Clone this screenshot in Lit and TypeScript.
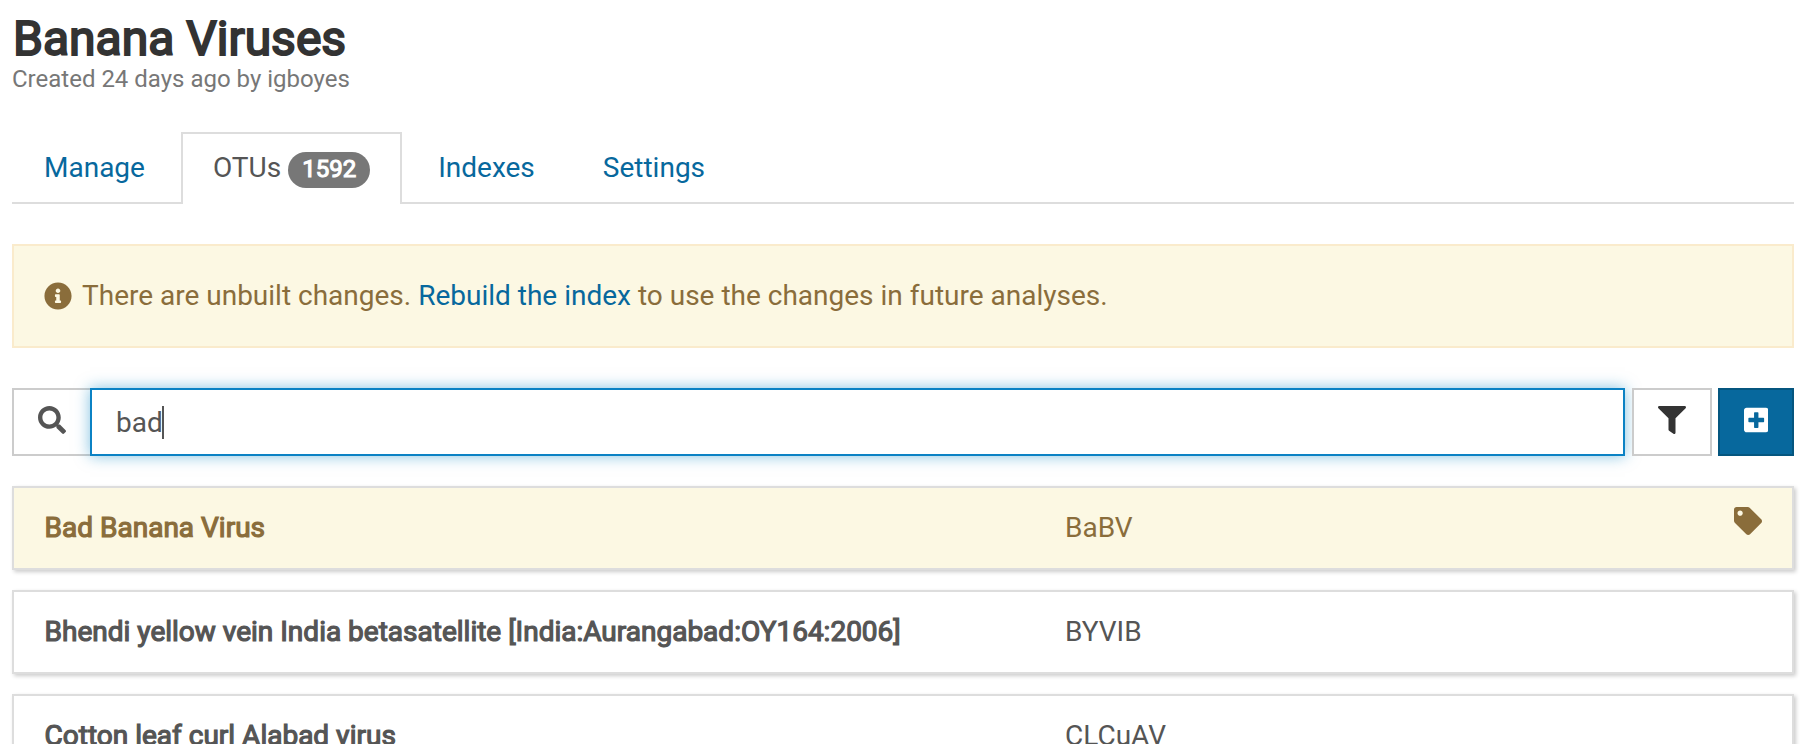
import { LitElement, html, css, svg } from "lit";
import { customElement, property } from "lit/decorators.js";

const ICONS: Record<string, { w: number; d: string }> = {
  info: {
    w: 512,
    d: "M256 8C119.043 8 8 119.083 8 256c0 136.997 111.043 248 248 248s248-111.003 248-248C504 119.083 392.957 8 256 8zm0 110c23.196 0 42 18.804 42 42s-18.804 42-42 42-42-18.804-42-42 18.804-42 42-42zm56 254c0 6.627-5.373 12-12 12h-88c-6.627 0-12-5.373-12-12v-24c0-6.627 5.373-12 12-12h12v-64h-12c-6.627 0-12-5.373-12-12v-24c0-6.627 5.373-12 12-12h64c6.627 0 12 5.373 12 12v100h12c6.627 0 12 5.373 12 12v24z",
  },
  search: {
    w: 512,
    d: "M505 442.7L405.3 343c-4.5-4.5-10.6-7-17-7H372c27.6-35.3 44-79.7 44-128C416 93.1 322.9 0 208 0S0 93.1 0 208s93.1 208 208 208c48.3 0 92.7-16.4 128-44v16.3c0 6.4 2.5 12.5 7 17l99.7 99.7c9.4 9.4 24.6 9.4 33.9 0l28.3-28.3c9.4-9.4 9.4-24.6.1-34zM208 336c-70.7 0-128-57.2-128-128 0-70.7 57.2-128 128-128 70.7 0 128 57.2 128 128 0 70.7-57.2 128-128 128z",
  },
  filter: {
    w: 512,
    d: "M487.976 0H24.028C2.71 0-8.047 25.866 7.058 40.971L192 225.941V432c0 7.831 3.821 15.17 10.237 19.662l80 55.98C298.02 518.69 320 507.493 320 487.98V225.941l184.947-184.97C520.021 25.896 509.338 0 487.976 0z",
  },
  plus: {
    w: 448,
    d: "M400 32H48C21.5 32 0 53.5 0 80v352c0 26.500 21.500 48 48 48h352c26.500 0 48-21.500 48-48V80c0-26.500-21.500-48-48-48zm-32 252c0 6.600-5.400 12-12 12h-92v92c0 6.600-5.400 12-12 12h-56c-6.600 0-12-5.400-12-12v-92H92c-6.600 0-12-5.400-12-12v-56c0-6.600 5.400-12 12-12h92v-92c0-6.600 5.400-12 12-12h56c6.600 0 12 5.400 12 12v92h92c6.600 0 12 5.400 12 12v56z",
  },
  tag: {
    w: 512,
    d: "M0 252.118V48C0 21.490 21.490 0 48 0h204.118a48 48 0 0 1 33.941 14.059l211.882 211.882c18.745 18.745 18.745 49.137 0 67.882L293.823 497.941c-18.745 18.745-49.137 18.745-67.882 0L14.059 286.059A48 48 0 0 1 0 252.118zM112 64c-26.510 0-48 21.490-48 48s21.490 48 48 48 48-21.490 48-48-21.490-48-48-48z",
  },
};

@customElement("fa-icon")
class FaIcon extends LitElement {
  @property() name = "info";

  static styles = css`
    :host {
      display: block;
      height: 28px;
    }
    svg {
      display: block;
      height: 28px;
      fill: currentColor;
    }
  `;

  render() {
    const icon = ICONS[this.name];
    return html`<svg viewBox="0 0 ${icon.w} 512" width=${(icon.w * 28) / 512}>
      ${svg`<path d=${icon.d}></path>`}
    </svg>`;
  }
}

interface Otu {
  name: string;
  abbreviation: string;
  modified?: boolean;
}

@customElement("app-root")
class AppRoot extends LitElement {
  private otus: Otu[] = [
    { name: "Bad Banana Virus", abbreviation: "BaBV", modified: true },
    { name: "Bhendi yellow vein India betasatellite [India:Aurangabad:OY164:2006]", abbreviation: "BYVIB" },
    { name: "Cotton leaf curl Alabad virus", abbreviation: "CLCuAV" },
  ];

  static styles = css`
    * {
      box-sizing: border-box;
    }
    :host {
      display: block;
      height: 744px;
      overflow: hidden;
      padding: 12px 14px 0 12px;
      background: #fff;
      color: #555;
      font: 28px/40px Roboto, sans-serif;
    }
    h1 {
      margin: 0;
      padding-left: 1px;
      font-size: 48px;
      line-height: 53px;
      font-weight: 400;
      color: #333;
      -webkit-text-stroke: 2px #333;
    }
    .created {
      font-size: 24px;
      line-height: 28px;
      color: #777;
    }
    .tabs {
      display: flex;
      gap: 4px;
      height: 72px;
      margin-top: 39px;
      box-shadow: inset 0 -2px #ddd;
    }
    .tab {
      display: flex;
      align-items: center;
      padding: 0 30px 2px;
      border: 2px solid transparent;
      border-bottom: 0;
      color: #07689d;
    }
    .tab.active {
      color: #555;
      background: #fff;
      border-color: #ddd;
    }
    .badge {
      margin: 4px 0 0 7px;
      width: 82px;
      height: 36px;
      border-radius: 18px;
      background: #777;
      color: #fff;
      font-size: 24px;
      line-height: 35px;
      text-align: center;
      -webkit-text-stroke: 1.1px #fff;
    }
    .alert {
      display: flex;
      align-items: center;
      gap: 10px;
      height: 104px;
      margin-top: 40px;
      padding: 0 30px;
      border: 2px solid #faebcc;
      background: #fcf8e3;
      color: #8a6d3b;
    }
    .alert a {
      color: #07689d;
    }
    .toolbar {
      display: flex;
      height: 68px;
      margin-top: 40px;
    }
    .addon {
      width: 78px;
      border: 2px solid #ccc;
      border-right: 0;
      padding: 16px 0 0 24px;
    }
    .field {
      flex: 1;
      display: flex;
      align-items: center;
      border: 2px solid #0b82c4;
      padding: 1px 24px 0;
      background: #fff;
      box-shadow: 0 0 14px rgba(8, 133, 196, 0.5);
    }
    .caret {
      width: 2px;
      height: 33px;
      margin-left: -1px;
      background: #555;
    }
    .button {
      display: flex;
      justify-content: center;
      padding-top: 16px;
      border: 2px solid #ccc;
      background: #fff;
      color: #333;
    }
    .button.filter {
      width: 80px;
      margin-left: 7px;
    }
    .button.create {
      width: 76px;
      margin-left: 6px;
      border-color: #05567f;
      background: #07689d;
      color: #fff;
    }
    .list {
      display: flex;
      flex-direction: column;
      gap: 20px;
      margin-top: 30px;
    }
    .row {
      display: grid;
      grid-template-columns: 1021px 1fr 28px;
      height: 84px;
      padding: 20px 30px 0;
      border: 2px solid #ddd;
      box-shadow: 2px 2px 4px #ccc;
      background: #fff;
    }
    .row.modified {
      background: #fcf8e3;
      color: #8a6d3b;
    }
    .row fa-icon {
      margin-top: -1px;
    }
    .name {
      padding-left: 0.6px;
      -webkit-text-stroke: 1.2px currentColor;
    }
  `;

  render() {
    return html`
      <h1>Banana Viruses</h1>
      <div class="created">Created 24 days ago by igboyes</div>
      <nav class="tabs">
        <div class="tab">Manage</div>
        <div class="tab active">OTUs<span class="badge">1592</span></div>
        <div class="tab">Indexes</div>
        <div class="tab">Settings</div>
      </nav>
      <div class="alert">
        <fa-icon name="info"></fa-icon>
        <span>There are unbuilt changes. <a>Rebuild the index</a> to use the changes in future analyses.</span>
      </div>
      <div class="toolbar">
        <div class="addon"><fa-icon name="search"></fa-icon></div>
        <div class="field"><span>bad</span><span class="caret"></span></div>
        <div class="button filter"><fa-icon name="filter"></fa-icon></div>
        <div class="button create"><fa-icon name="plus"></fa-icon></div>
      </div>
      <div class="list">
        ${this.otus.map(
          (otu) => html`<div class="row ${otu.modified ? "modified" : ""}">
            <span class="name">${otu.name}</span>
            <span>${otu.abbreviation}</span>
            ${otu.modified ? html`<fa-icon name="tag"></fa-icon>` : null}
          </div>`
        )}
      </div>
    `;
  }
}
